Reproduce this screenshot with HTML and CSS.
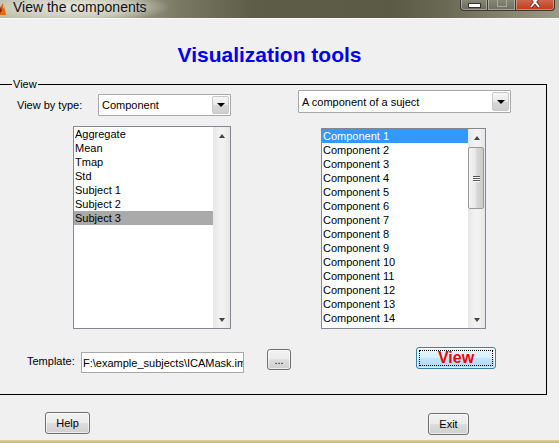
FILE: index.html
```html
<!DOCTYPE html>
<html>
<head>
<meta charset="utf-8">
<link rel="stylesheet" href="styles.css">
</head>
<body>
<div class="window">
  <div class="titlebar">
    <svg class="app-icon" width="8" height="14" viewBox="0 0 8 14"><path d="M0 13 L3 4 L5 1 L7 7 L8 13 Z" fill="#e46a12"/><path d="M0 13 L3 4 L4 9 Z" fill="#8a2a08"/><path d="M5 1 L7 7 L5 6 Z" fill="#f6b03a"/></svg>
    <span class="title-text">View the components</span>
    <div class="win-buttons">
      <div class="wbtn wmin"><span class="dash"></span></div>
      <div class="wbtn wmax"><span class="box"></span></div>
      <div class="wbtn wclose"><svg class="x" width="12" height="8" viewBox="0 0 12 8"><path d="M2 -3 L10 7 M10 -3 L2 7" stroke="#5a1a0a" stroke-width="3.4"/><path d="M2 -3 L10 7 M10 -3 L2 7" stroke="#fff" stroke-width="2"/></svg></div>
    </div>
  </div>
  <div class="content">
    <h1 class="heading">Visualization tools</h1>
    <div class="group">
      <span class="group-label">View</span>
      <div class="row row-top">
        <div class="type-field">
          <span class="label type-label">View by type:</span>
          <div class="select select-type">
            <span class="select-text">Component</span>
            <span class="select-btn"><span class="tri-down"></span></span>
          </div>
        </div>
        <div class="select select-sub">
          <span class="select-text">A component of a suject</span>
          <span class="select-btn"><span class="tri-down"></span></span>
        </div>
      </div>
      <div class="row row-lists">
        <div class="listbox list-left">
          <div class="items">
            <div class="item">Aggregate</div>
            <div class="item">Mean</div>
            <div class="item">Tmap</div>
            <div class="item">Std</div>
            <div class="item">Subject 1</div>
            <div class="item">Subject 2</div>
            <div class="item sel-gray">Subject 3</div>
          </div>
          <div class="scrollbar">
            <div class="sb-arrow"><span class="tri-up small"></span></div>
            <div class="sb-track"></div>
            <div class="sb-arrow"><span class="tri-down small"></span></div>
          </div>
        </div>
        <div class="listbox list-right">
          <div class="items">
            <div class="item sel-blue">Component 1</div>
            <div class="item">Component 2</div>
            <div class="item">Component 3</div>
            <div class="item">Component 4</div>
            <div class="item">Component 5</div>
            <div class="item">Component 6</div>
            <div class="item">Component 7</div>
            <div class="item">Component 8</div>
            <div class="item">Component 9</div>
            <div class="item">Component 10</div>
            <div class="item">Component 11</div>
            <div class="item">Component 12</div>
            <div class="item">Component 13</div>
            <div class="item">Component 14</div>
            <div class="item">Component 15</div>
          </div>
          <div class="scrollbar">
            <div class="sb-arrow"><span class="tri-up small"></span></div>
            <div class="sb-track">
              <div class="sb-thumb"><span class="grip"></span><span class="grip"></span><span class="grip"></span></div>
            </div>
            <div class="sb-arrow"><span class="tri-down small"></span></div>
          </div>
        </div>
      </div>
      <div class="row row-template">
        <span class="label tpl-label">Template:</span>
        <div class="textbox"><span class="textbox-text">F:\example_subjects\ICAMask.img</span></div>
        <button class="btn btn-browse">...</button>
        <button class="btn btn-view"><span class="focus">View</span></button>
      </div>
    </div>
    <div class="row footer">
      <button class="btn btn-help">Help</button>
      <button class="btn btn-exit">Exit</button>
    </div>
  </div>
  <div class="frame-bottom"></div>
</div>
</body>
</html>
```

FILE: styles.css
```css
html, body {
  margin: 0;
  padding: 0;
  background: #f0f0f0;
}
body {
  width: 559px;
  height: 443px;
  overflow: hidden;
  font-family: "Liberation Sans", Arial, sans-serif;
  font-size: 11px;
  color: #000;
}
.window {
  width: 559px;
  height: 443px;
  display: flex;
  flex-direction: column;
}
.titlebar {
  height: 18px;
  flex: none;
  display: flex;
  align-items: flex-start;
  position: relative;
  background:
    radial-gradient(ellipse 95px 16px at 75px 7px, rgba(236,236,224,0.95) 0%, rgba(220,220,206,0.7) 60%, rgba(200,200,186,0) 100%),
    linear-gradient(90deg, #bcbcab 0%, #a9a995 18%, #7a7a64 32%, #5d5d48 45%, #5a5a45 70%, #6a6a55 80%, #9a9a88 100%);
  border-bottom: 1px solid #fafafa;
}
.app-icon {
  flex: none;
  margin-top: 2px;
  margin-left: -2px;
}
.title-text {
  margin-left: 7px;
  font-family: "Liberation Sans", Arial, sans-serif;
  font-size: 14px;
  line-height: 16px;
  color: #10101a;
  margin-top: -1px;
}
.win-buttons {
  position: absolute;
  left: 460px;
  top: -1px;
  display: flex;
}
.wbtn {
  height: 11px;
  border: 1px solid #3a3a2e;
  border-top: none;
  box-shadow: inset 0 0 0 1px rgba(255,255,255,0.35);
  display: flex;
  align-items: center;
  justify-content: center;
}
.wmin {
  width: 26px;
  border-radius: 0 0 0 4px;
  background: linear-gradient(#8a8a7a, #6a6a5a);
}
.wmax {
  width: 27px;
  border-left: none;
  background: linear-gradient(#8a8a7a, #6e6e5e);
}
.wclose {
  width: 38px;
  border-left: none;
  border-radius: 0 0 4px 0;
  background: linear-gradient(#cf6a50, #c23a1e);
  overflow: hidden;
  align-items: flex-start;
}
.dash {
  width: 11px;
  height: 3px;
  background: #fff;
  border: 1px solid #333;
  margin-top: 1px;
}
.box {
  width: 8px;
  height: 6px;
  border: 1px solid #a9a99a;
  margin-top: -4px;
}
.x {
  display: block;
  margin-top: 1px;
}
.content {
  flex: none;
  height: 421px;
}
.heading {
  margin: 24px 20px 0 0;
  height: 24px;
  font-size: 21px;
  line-height: 24px;
  font-weight: bold;
  color: #0000f0;
  text-align: center;
  font-family: "Liberation Sans", Arial, sans-serif;
}
.group {
  position: relative;
  margin-top: 17px;
  width: 546px;
  height: 309px;
  border: 1px solid #000;
  border-left: none;
}
.group-label {
  position: absolute;
  left: 12px;
  top: -7px;
  padding: 0 1px;
  background: #f0f0f0;
  font-size: 11px;
  line-height: 13px;
}
.row {
  display: flex;
  align-items: flex-start;
}
.row-top {
  padding-top: 5px;
}
.type-field {
  display: flex;
  align-items: center;
  margin-top: 4px;
  padding-left: 17px;
}
.type-label {
  width: 81px;
}
.select {
  box-sizing: border-box;
  display: flex;
  align-items: stretch;
  background: #fff;
  border: 1px solid #a8a8a8;
  border-radius: 1px;
}
.select-type {
  width: 133px;
  height: 22px;
}
.select-sub {
  margin-left: 67px;
  width: 213px;
  height: 23px;
}
.select-text {
  flex: 1;
  padding-left: 3px;
  display: flex;
  align-items: center;
  white-space: nowrap;
  overflow: hidden;
}
.select-btn {
  width: 17px;
  margin: 1px;
  box-sizing: border-box;
  border: 1px solid #c8c8c8;
  border-radius: 2px;
  background: linear-gradient(#f6f6f6 0%, #e8e8e8 50%, #d8d8d8 51%, #cfcfcf 100%);
  display: flex;
  align-items: center;
  justify-content: center;
}
.tri-down {
  width: 0;
  height: 0;
  border-left: 4px solid transparent;
  border-right: 4px solid transparent;
  border-top: 4px solid #000;
}
.tri-up {
  width: 0;
  height: 0;
  border-left: 4px solid transparent;
  border-right: 4px solid transparent;
  border-bottom: 4px solid #000;
}
.tri-down.small {
  border-left-width: 3.5px;
  border-right-width: 3.5px;
  border-top: 4px solid #444;
}
.tri-up.small {
  border-left-width: 3.5px;
  border-right-width: 3.5px;
  border-bottom: 4px solid #444;
}
.row-lists {
  height: 213px;
}
.listbox {
  box-sizing: border-box;
  display: flex;
  background: #fff;
  border: 1px solid #828790;
  overflow: hidden;
}
.list-left {
  margin-top: 10px;
  margin-left: 73px;
  width: 158px;
  height: 203px;
}
.list-right {
  margin-top: 12px;
  margin-left: 90px;
  width: 165px;
  height: 201px;
}
.items {
  flex: 1;
  overflow: hidden;
}
.item {
  height: 14px;
  line-height: 14px;
  padding-left: 1px;
  white-space: nowrap;
}
.sel-gray {
  background: #aaaaaa;
}
.sel-blue {
  background: #3399ff;
  color: #fff;
}
.scrollbar {
  width: 17px;
  flex: none;
  display: flex;
  flex-direction: column;
  background: linear-gradient(90deg, #e6e6e6, #f2f2f2 40%, #f2f2f2 60%, #e6e6e6);
}
.sb-arrow {
  height: 17px;
  flex: none;
  display: flex;
  align-items: center;
  justify-content: center;
}
.sb-track {
  flex: 1;
  padding-top: 1px;
}
.sb-thumb {
  box-sizing: border-box;
  width: 16px;
  height: 62px;
  margin-left: 0;
  border: 1px solid #9a9a9a;
  border-radius: 2px;
  background: linear-gradient(90deg, #f4f4f4 0%, #e9e9e9 45%, #d8d8d8 55%, #cacaca 100%);
  display: flex;
  flex-direction: column;
  align-items: center;
  justify-content: center;
  gap: 1px;
}
.grip {
  width: 7px;
  height: 1px;
  background: #555;
  box-shadow: 0 1px 0 #fff;
}
.row-template {
  padding-top: 18px;
}
.tpl-label {
  margin-top: 5px;
  padding-left: 27px;
  width: 54px;
  height: 20px;
  line-height: 18px;
}
.textbox {
  box-sizing: border-box;
  margin-top: 5px;
  width: 163px;
  height: 21px;
  border: 1px solid #a8a8a8;
  background: #fff;
  overflow: hidden;
  display: flex;
  align-items: center;
  padding-left: 1px;
}
.textbox-text {
  white-space: nowrap;
}
.btn {
  box-sizing: border-box;
  font-family: "Liberation Sans", Arial, sans-serif;
  font-size: 11px;
  color: #000;
  padding: 0;
  border: 1px solid #707070;
  border-radius: 3px;
  background: linear-gradient(#f2f2f2 0%, #ebebeb 48%, #dddddd 52%, #cfcfcf 100%);
  box-shadow: inset 0 0 0 1px rgba(255,255,255,0.6);
}
.btn-browse {
  margin-top: 2px;
  margin-left: 23px;
  width: 24px;
  height: 21px;
  line-height: 14px;
}
.btn-view {
  margin-left: 125px;
  width: 80px;
  height: 22px;
  border: 1px solid #3c7fb1;
  background: linear-gradient(#eaf6fd 0%, #d9f0fc 48%, #bee6fd 52%, #a7d9f5 100%);
  padding: 2px;
}
.focus {
  display: flex;
  align-items: center;
  justify-content: center;
  height: 100%;
  border: 1px dotted #000;
  box-sizing: border-box;
  color: #f00000;
  font-weight: bold;
  font-size: 16px;
}
.footer {
  margin-top: 17px;
}
.btn-help {
  margin-left: 45px;
  width: 45px;
  height: 22px;
}
.btn-exit {
  margin-top: 1px;
  margin-left: 338px;
  width: 41px;
  height: 22px;
}
.frame-bottom {
  flex: none;
  height: 3px;
  background: linear-gradient(#e2cfa4, #c9b27a);
}
```
